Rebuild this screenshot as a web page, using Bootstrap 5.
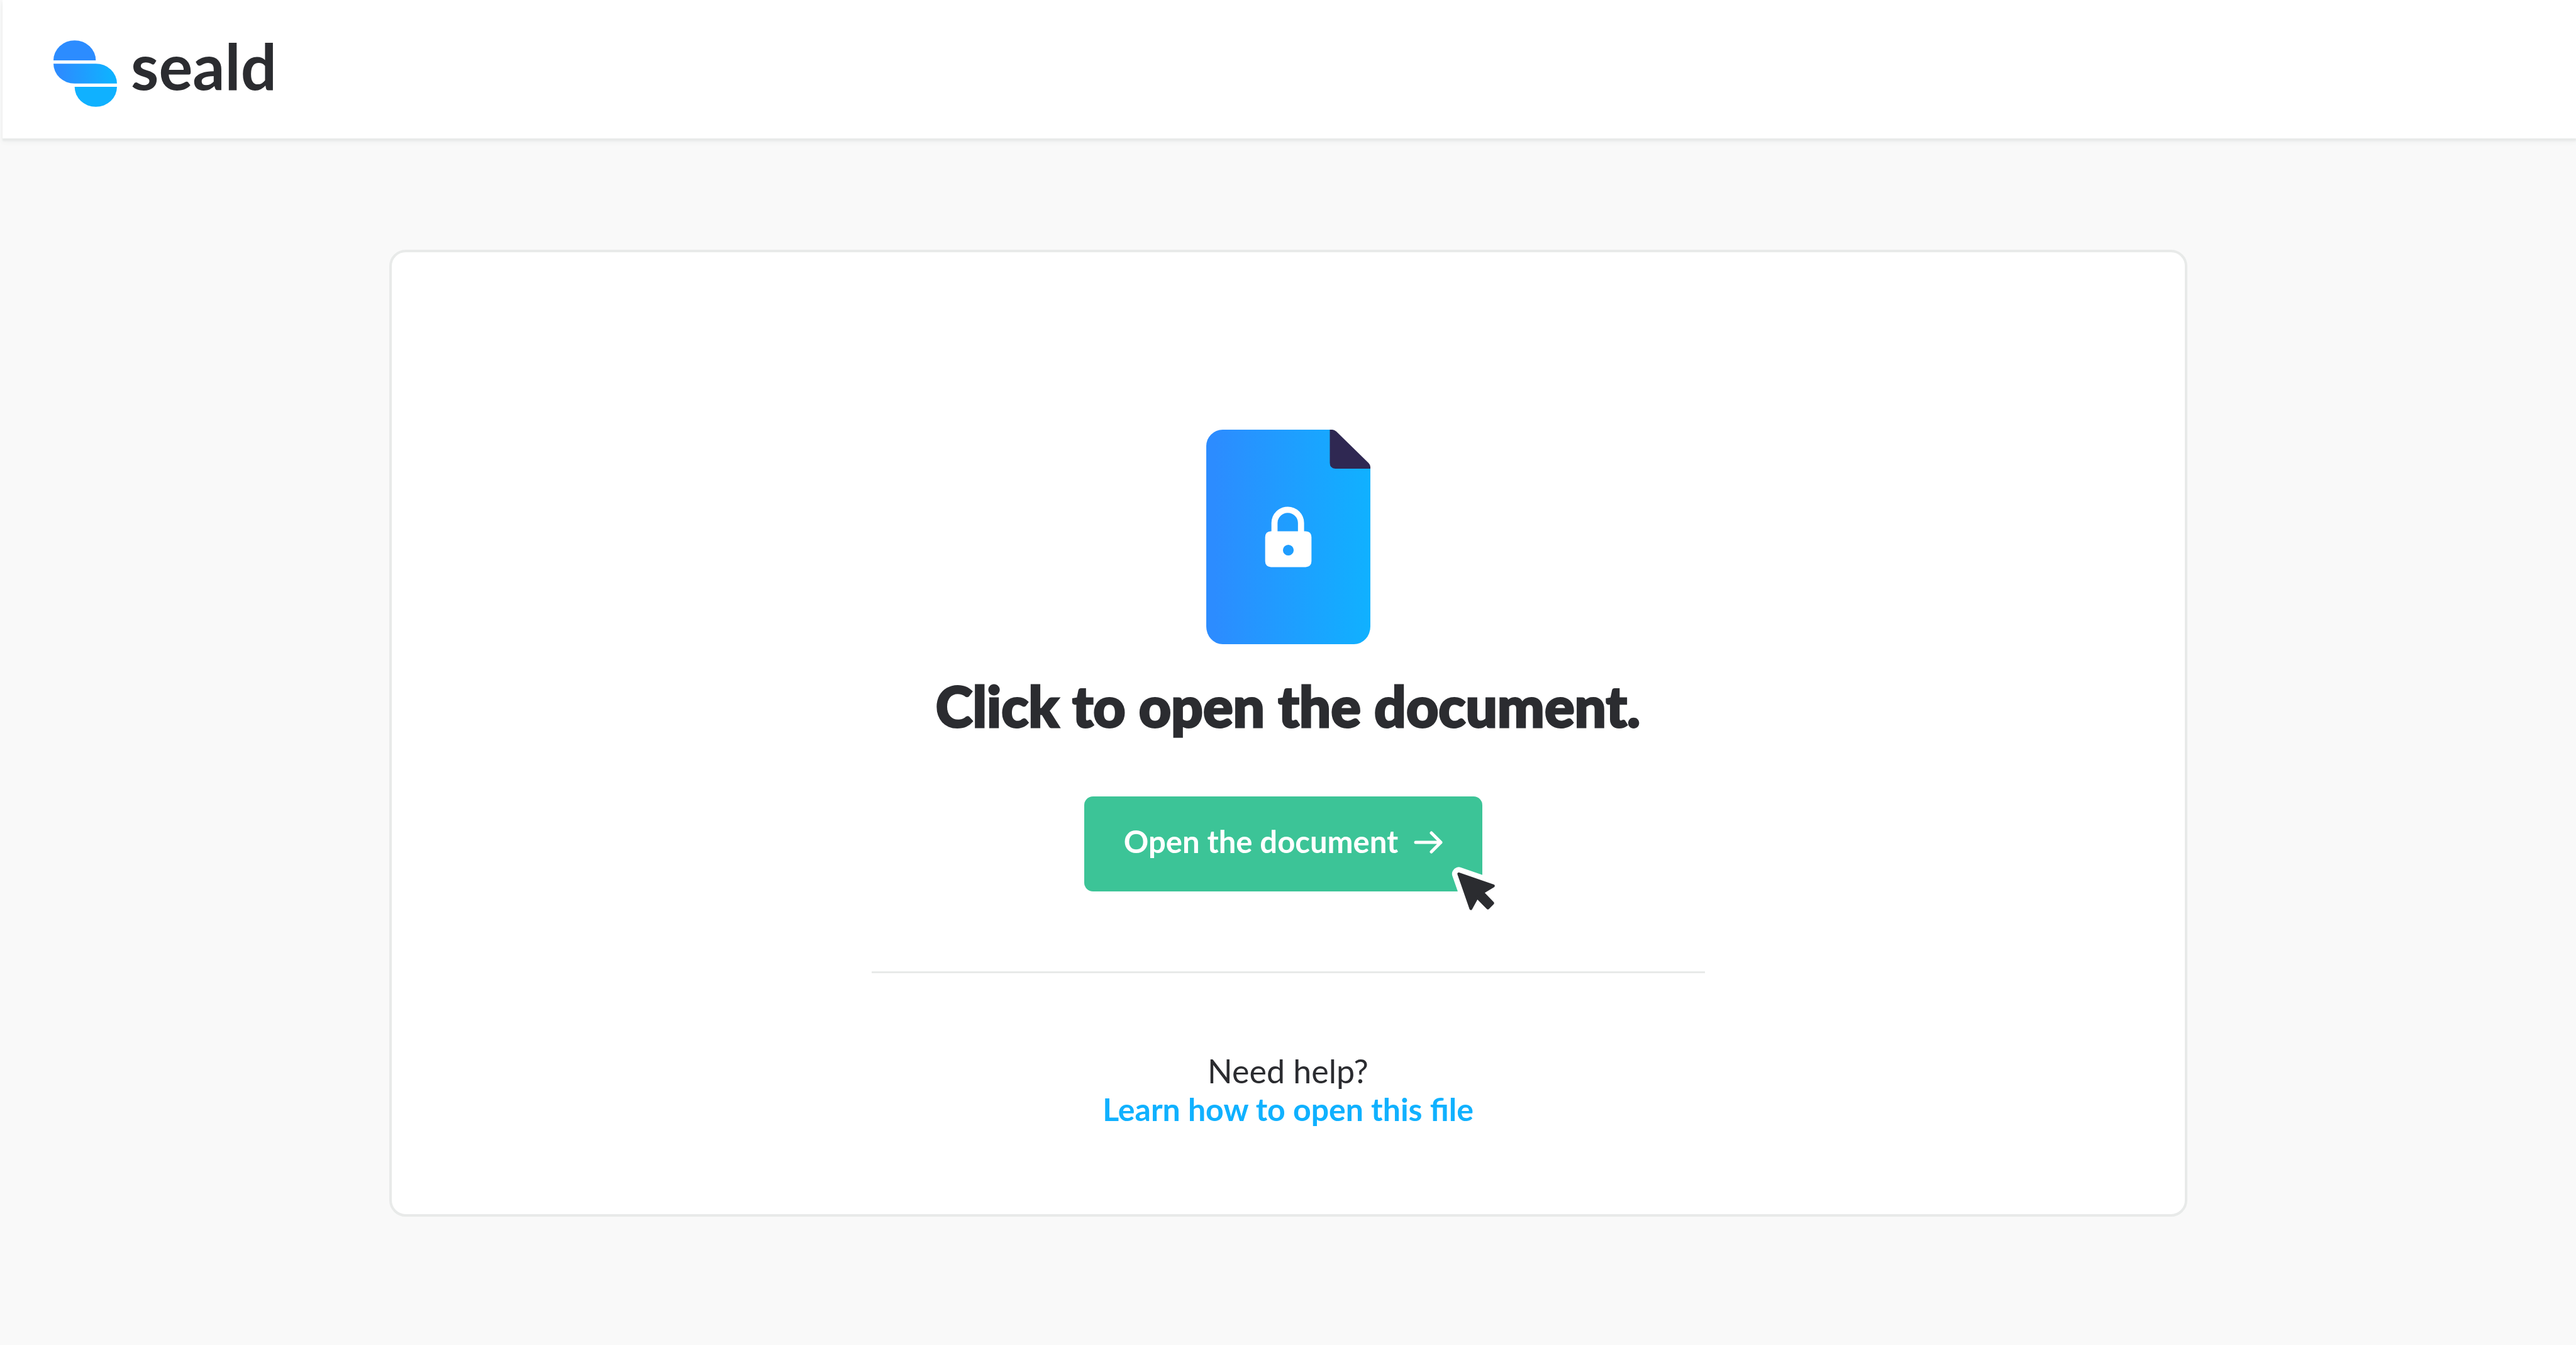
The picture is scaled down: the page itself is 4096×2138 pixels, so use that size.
<!DOCTYPE html>
<html lang="en">
<head>
<meta charset="utf-8">
<meta name="viewport" content="width=device-width, initial-scale=1">
<title>Seald</title>
<link href="https://cdn.jsdelivr.net/npm/bootstrap@5.3.0/dist/css/bootstrap.min.css" rel="stylesheet">
<style>
  body { background: #f9f9f9; color: #2b2c30; font-family: Lato, sans-serif; }
  .site-header { height: 220px; margin-left: 4px; padding: 64px 81px 0; box-shadow: 0 4px 2px #e8eae9, 0 5px 8px #eceeed; }
  .brand-link { color: #2b2c30; font-size: 101px; line-height: 80px; gap: 22px; }
  .brand-link svg { width: 101px; height: 106px; }
  .stage { padding: 177px 0 204px; }
  .open-card { width: 69.8%; padding: 282px 0 136px; border: 4px solid #e8eae9; border-radius: 26px; }
  .file-icon { width: 261px; height: 341px; }
  .open-title { font-size: 89px; line-height: 108px; font-weight: 900; margin: 44px 0 90px; -webkit-text-stroke: 3px #2b2c30; }
  .open-action { margin-right: 15px; }
  .btn-open { --bs-btn-bg: #3cc497; --bs-btn-color: #fff; --bs-btn-hover-bg: #34b288; --bs-btn-hover-color: #fff;
    height: 151px; padding: 0 63px 6px; gap: 25px; border: 0; border-radius: 14px; font-size: 49px; line-height: 60px; font-weight: 700; }
  .btn-open svg { width: 46px; height: 36px; }
  .pointer { width: 79px; height: 79px; right: -28px; bottom: -37px; pointer-events: none; }
  .rule { width: 1325px; height: 3px; margin: 127px 0 125px; background: #e8eae9; }
  .help { font-size: 52px; line-height: 61px; }
  .help a { color: #10b1ff; font-size: 50px; }
</style>
<script src="https://cdn.jsdelivr.net/npm/bootstrap@5.3.0/dist/js/bootstrap.bundle.min.js"></script>
</head>
<body>
<header class="site-header bg-white d-flex align-items-start">
  <a class="brand-link d-flex align-items-start fw-bold text-decoration-none" href="#">
    <svg viewBox="0 0 132 138" aria-hidden="true">
      <defs><linearGradient id="brandFill" x1="0" x2="1"><stop offset=".1" stop-color="#2c8cff"/><stop offset=".9" stop-color="#10b1ff"/></linearGradient></defs>
      <path fill="#2c8cff" d="M0 41.5a44 41.5 0 0 1 88 0z"/>
      <path fill="url(#brandFill)" d="M0 48.3h88a44 41.5 0 0 1 44 41.4H44A44 41.5 0 0 1 0 48.3z"/>
      <path fill="#10b1ff" d="M44 96.6h88a44 41.4 0 0 1-88 0z"/>
    </svg>
    <span>seald</span>
  </a>
</header>
<main class="stage d-flex justify-content-center">
  <section class="open-card bg-white d-flex flex-column align-items-center text-center">
    <svg class="file-icon" viewBox="138 88 1020 1333" aria-hidden="true">
      <defs><linearGradient id="fileFill" x1="0" x2="1"><stop offset=".05" stop-color="#2c8cff"/><stop offset="1" stop-color="#10b1ff"/></linearGradient></defs>
      <path fill="url(#fileFill)" d="M240 88H924L1158 322V1312A102 109 0 0 1 1056 1421H240A102 109 0 0 1 138 1312V190A102 102 0 0 1 240 88z"/>
      <path fill="#2f2852" d="M906 88H920Q934 88 946 99L1147 295Q1158 306 1158 320V330H940Q906 328 906 294z"/>
      <path fill="none" stroke="#fff" stroke-width="38" d="M562 730V668a82.500 82.500 0 0 1 165 0V730"/>
      <path fill="#fff" fill-rule="evenodd" d="M540 719H756Q792 721 792 756V905Q792 938 756 942H540Q504 938 504 905V756Q504 721 540 719zM648 803a33 33 0 1 0 0 67a33 33 0 0 0 0-67z"/>
    </svg>
    <h1 class="open-title">Click to open the document.</h1>
    <div class="open-action position-relative">
      <button type="button" class="btn btn-open d-flex align-items-center">
        <span class="pb-1">Open the document</span>
        <svg viewBox="0 0 46 36" fill="none" stroke="#fff" stroke-width="5" stroke-linecap="round" stroke-linejoin="round" aria-hidden="true"><path d="M3 18H43M28 3L43 18L28 33"/></svg>
      </button>
      <svg class="pointer position-absolute" viewBox="70 60 309 309" aria-hidden="true">
        <path fill="#fff" stroke="#fff" stroke-width="84" stroke-linejoin="round" d="M123 115L338 190L270 231L334 297L304 327L237 260L198 331z"/>
        <path fill="#2b2c30" stroke="#2b2c30" stroke-width="18" stroke-linejoin="round" d="M123 115L338 190L270 231L334 297L304 327L237 260L198 331z"/>
      </svg>
    </div>
    <div class="rule"></div>
    <div class="help d-flex flex-column">
      <span>Need help?</span>
      <a class="fw-bold text-decoration-none" href="#">Learn how to open this file</a>
    </div>
  </section>
</main>
</body>
</html>
